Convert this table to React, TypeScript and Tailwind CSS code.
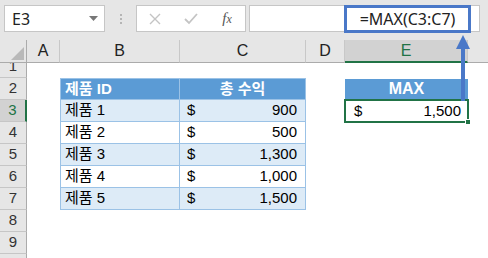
import React from 'react';

const font = { fontFamily: '"Liberation Sans", "Noto Sans CJK KR", sans-serif' };

const cols = [
  { id: 'A', w: 'w-[33px]' },
  { id: 'B', w: 'w-[120px]' },
  { id: 'C', w: 'w-[126px]' },
  { id: 'D', w: 'w-[39px]' },
  { id: 'E', w: 'w-[123px]' },
];

const products = [
  { name: '제품 1', value: '900' },
  { name: '제품 2', value: '500' },
  { name: '제품 3', value: '1,300' },
  { name: '제품 4', value: '1,000' },
  { name: '제품 5', value: '1,500' },
];

const RowHead: React.FC<{ n: number; active?: boolean; h?: string }> = ({ n, active, h = 'h-[22px]' }) => (
  <div
    className={`w-[27px] shrink-0 ${h} flex flex-col justify-end overflow-hidden border-b border-[#c6c6c6] ${
      active ? 'bg-[#d2d2d2] border-r-2 border-r-[#217346] text-[#217346]' : 'bg-[#e6e6e6] border-r border-r-[#ababab] text-[#333]'
    }`}
  >
    <div className="h-[22px] shrink-0 flex items-center justify-center text-[15px]">{n}</div>
  </div>
);

const TopBar: React.FC = () => (
  <div className="relative h-[40px] bg-[#e6e6e6] flex items-start pt-[5px] pl-[4px] pr-[8px]">
    <div className="w-[101px] h-[27px] bg-white border border-[#c6c6c6] flex items-center justify-between pl-[7px] pr-[6px]">
      <span className="text-[16px] text-[#222]" style={{ fontFamily: '"Noto Sans", sans-serif' }}>E3</span>
      <svg width="9" height="5" viewBox="0 0 9 5"><path d="M0 0h9L4.5 5z" fill="#777" /></svg>
    </div>
    <div className="w-[31px] h-[27px] flex flex-col items-center justify-center gap-[2px]">
      <span className="w-[2px] h-[2px] bg-[#b5b5b5]" />
      <span className="w-[2px] h-[2px] bg-[#b5b5b5]" />
      <span className="w-[2px] h-[2px] bg-[#b5b5b5]" />
    </div>
    <div className="w-[110px] h-[27px] bg-white border border-[#c6c6c6] flex items-center">
      <div className="w-[36px] flex justify-center">
        <svg width="12" height="12" viewBox="0 0 12 12"><path d="M1 1l10 10M11 1L1 11" stroke="#c4c4c4" strokeWidth="1.4" /></svg>
      </div>
      <div className="w-[36px] flex justify-center">
        <svg width="14" height="12" viewBox="0 0 14 12"><path d="M1 6l4 4 8-9" stroke="#c4c4c4" strokeWidth="1.8" fill="none" /></svg>
      </div>
      <div className="flex-1 flex justify-center">
        <span className="italic text-[15px] text-[#555]" style={{ fontFamily: '"Liberation Serif", serif' }}>
          f<span className="text-[12px]">x</span>
        </span>
      </div>
    </div>
    <div className="ml-[3px] flex-1 h-[27px] bg-white border border-[#c6c6c6]" />
    <div className="absolute left-[344px] top-[5px] w-[127px] h-[28px] border-[3px] border-[#4a78c8] bg-white flex items-center justify-center">
      <span className="text-[16px] text-[#222]" style={{ fontFamily: '"Noto Sans", sans-serif' }}>=MAX(C3:C7)</span>
    </div>
  </div>
);

const ColHeader: React.FC = () => (
  <div className="flex h-[23px] bg-[#e6e6e6]">
    <div className="w-[27px] shrink-0 border-r border-b border-[#ababab] flex items-end justify-end p-[2px]">
      <svg width="13" height="13" viewBox="0 0 13 13"><path d="M13 0v13H0z" fill="#b9b9b9" /></svg>
    </div>
    {cols.map((c) => (
      <div
        key={c.id}
        className={`${c.w} shrink-0 flex items-center justify-center text-[16px] border-r border-r-[#c8c8c8] ${
          c.id === 'E' ? 'bg-[#d2d2d2] border-b-2 border-b-[#217346] text-[#217346]' : 'border-b border-b-[#ababab] text-[#222]'
        }`}
      >
        {c.id}
      </div>
    ))}
    <div className="flex-1 border-b border-[#ababab]" />
  </div>
);

const Spacer: React.FC<{ w: string }> = ({ w }) => <div className={`${w} shrink-0`} />;

export default function App() {
  return (
    <div className="relative w-[488px] h-[258px] overflow-hidden bg-white" style={font}>
      <TopBar />
      <ColHeader />

      {/* row 1 */}
      <div className="flex">
        <RowHead n={1} h="h-[15px]" />
      </div>

      {/* row 2 - headers */}
      <div className="flex h-[22px]">
        <RowHead n={2} />
        <Spacer w="w-[33px]" />
        <div className="w-[120px] shrink-0 bg-[#5b9bd5] border border-[#9bc2e6] flex items-center pl-[4px] text-white font-bold text-[15px]">
          제품 ID
        </div>
        <div className="w-[126px] shrink-0 bg-[#5b9bd5] border-y border-r border-[#9bc2e6] flex items-center justify-center text-white font-bold text-[15px]">
          총 수익
        </div>
        <Spacer w="w-[39px]" />
        <div className="w-[123px] shrink-0 pt-[1px] pb-[1px]">
          <div className="h-full bg-[#5b9bd5] flex items-center justify-center text-white font-bold text-[16px]">MAX</div>
        </div>
      </div>

      {products.map((p, i) => (
        <div key={p.name} className="flex h-[22px]">
          <RowHead n={i + 3} active={i === 0} />
          <Spacer w={i === 0 ? 'w-[33px]' : 'w-[33px]'} />
          <div
            className={`w-[120px] shrink-0 border-x border-b border-[#9bc2e6] flex items-center pl-[4px] text-[15px] text-black ${
              i % 2 === 0 ? 'bg-[#ddebf7]' : 'bg-white'
            }`}
          >
            {p.name}
          </div>
          <div
            className={`w-[126px] shrink-0 border-r border-b border-[#9bc2e6] flex items-center justify-between pl-[7px] pr-[8px] text-[15px] text-black ${
              i % 2 === 0 ? 'bg-[#ddebf7]' : 'bg-white'
            }`}
          >
            <span>$</span>
            <span>{p.value}</span>
          </div>
          {i === 0 && (
            <>
              <Spacer w="w-[39px]" />
              <div className="relative w-[123px] shrink-0 flex items-center justify-between pl-[9px] pr-[7px] text-[15px] text-black">
                <span>$</span>
                <span>1,500</span>
                <div className="absolute -left-[1px] -top-[1px] -right-[1px] -bottom-[1px] border-2 border-[#217346]" />
                <div className="absolute -right-[3px] -bottom-[3px] w-[6px] h-[6px] bg-[#217346] border border-white" />
              </div>
            </>
          )}
        </div>
      ))}

      {[8, 9, 10].map((n) => (
        <div key={n} className="flex h-[22px]">
          <RowHead n={n} />
        </div>
      ))}

      <svg className="absolute left-0 top-0 pointer-events-none" width="488" height="258">
        <path d="M463 47V101" stroke="#4a78c8" strokeWidth="4" />
        <path d="M463 35L456 49H470Z" fill="#4a78c8" />
      </svg>
    </div>
  );
}
